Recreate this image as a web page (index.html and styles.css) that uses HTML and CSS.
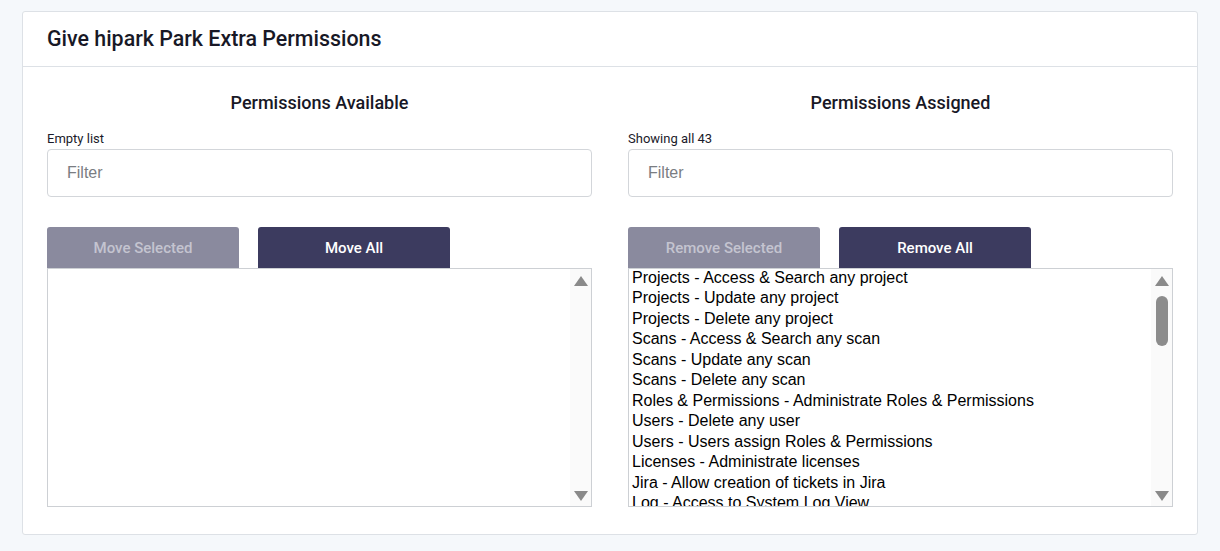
FILE: index.html
```html
<!DOCTYPE html>
<html lang="en">
<head>
<meta charset="utf-8">
<title>Give hipark Park Extra Permissions</title>
<link rel="stylesheet" href="styles.css">
</head>
<body>
<div class="card">
  <div class="card-header">
    <h1 class="card-title">Give hipark Park Extra Permissions</h1>
  </div>
  <div class="card-body">
    <section class="column">
      <h2 class="col-title">Permissions Available</h2>
      <div class="count">Empty list</div>
      <input class="filter" type="text" placeholder="Filter">
      <div class="actions">
        <button class="btn btn-disabled" type="button">Move Selected</button>
        <button class="btn btn-primary" type="button">Move All</button>
      </div>
      <div class="listbox">
        <div class="items"></div>
        <div class="scrollbar">
          <span class="arrow up"></span>
          <span class="track"></span>
          <span class="arrow down"></span>
        </div>
      </div>
    </section>
    <section class="column">
      <h2 class="col-title">Permissions Assigned</h2>
      <div class="count">Showing all 43</div>
      <input class="filter" type="text" placeholder="Filter">
      <div class="actions">
        <button class="btn btn-disabled" type="button">Remove Selected</button>
        <button class="btn btn-primary" type="button">Remove All</button>
      </div>
      <div class="listbox">
        <div class="items">
          <div class="item">Projects - Access &amp; Search any project</div>
          <div class="item">Projects - Update any project</div>
          <div class="item">Projects - Delete any project</div>
          <div class="item">Scans - Access &amp; Search any scan</div>
          <div class="item">Scans - Update any scan</div>
          <div class="item">Scans - Delete any scan</div>
          <div class="item">Roles &amp; Permissions - Administrate Roles &amp; Permissions</div>
          <div class="item">Users - Delete any user</div>
          <div class="item">Users - Users assign Roles &amp; Permissions</div>
          <div class="item">Licenses - Administrate licenses</div>
          <div class="item">Jira - Allow creation of tickets in Jira</div>
          <div class="item">Log - Access to System Log View</div>
          <div class="item">Settings - Administrate settings</div>
        </div>
        <div class="scrollbar">
          <span class="arrow up"></span>
          <span class="thumb"></span>
          <span class="track"></span>
          <span class="arrow down"></span>
        </div>
      </div>
    </section>
  </div>
</div>
</body>
</html>
```

FILE: styles.css
```css
* { box-sizing: border-box; }

html, body {
  margin: 0;
  padding: 0;
  background: #f5f8fb;
  font-family: Roboto, "Liberation Sans", Arial, sans-serif;
  color: #1b1b2a;
}

body {
  padding: 11px 22px 16px 22px;
}

.card {
  background: #ffffff;
  border: 1px solid #dde1e6;
  border-radius: 3px;
}

.card-header {
  height: 55px;
  border-bottom: 1px solid #dde1e6;
  padding: 0 24px;
  display: flex;
  align-items: center;
}

.card-title {
  margin: 0;
  font-size: 21.4px;
  font-weight: 500;
  line-height: 26px;
  color: #181826;
}

.card-body {
  display: grid;
  grid-template-columns: 545px 545px;
  column-gap: 36px;
  padding: 25px 23px 27px 24px;
}

.column {
  display: flex;
  flex-direction: column;
}

.col-title {
  margin: 0 0 18px;
  text-align: center;
  font-size: 18px;
  font-weight: 500;
  line-height: 21px;
  color: #181826;
}

.count {
  font-size: 13px;
  line-height: 15px;
  color: #1b1b2a;
  margin-bottom: 3px;
}

.filter {
  height: 48px;
  border: 1px solid #d3d6da;
  border-radius: 4px;
  padding: 0 19px;
  font-family: "Liberation Sans", Arial, sans-serif;
  font-size: 16px;
  color: #333;
  outline: none;
}

.filter::placeholder {
  color: #7a7d82;
}

.actions {
  display: flex;
  gap: 19px;
  margin-top: 30px;
}

.btn {
  width: 192px;
  height: 41px;
  border: none;
  border-radius: 3px 3px 0 0;
  font-family: Roboto, "Liberation Sans", Arial, sans-serif;
  font-size: 15px;
  font-weight: 500;
  cursor: pointer;
}

.btn-disabled {
  background: #8a8a9e;
  color: #c4c4d0;
  cursor: default;
}

.btn-primary {
  background: #3c3b5f;
  color: #ffffff;
}

.listbox {
  height: 239px;
  border: 1px solid #cdd0d4;
  display: flex;
  overflow: hidden;
  background: #ffffff;
}

.items {
  flex: 1;
  overflow: hidden;
  padding: 0 3px;
  margin-top: -1px;
  font-family: "Liberation Sans", Arial, sans-serif;
  font-size: 16px;
  line-height: 20.45px;
  color: #000000;
}

.item {
  white-space: nowrap;
}

.scrollbar {
  width: 21px;
  background: #fafafa;
  display: flex;
  flex-direction: column;
  align-items: center;
  padding: 7px 0 5px;
}

.arrow {
  width: 0;
  height: 0;
  border-left: 7px solid transparent;
  border-right: 7px solid transparent;
}

.arrow.up {
  border-bottom: 10px solid #8a8a8a;
}

.arrow.down {
  border-top: 10px solid #8a8a8a;
}

.thumb {
  width: 12px;
  height: 50px;
  margin-top: 10px;
  border-radius: 6px;
  background: #8c8c8c;
}

.track {
  flex: 1;
}
```
